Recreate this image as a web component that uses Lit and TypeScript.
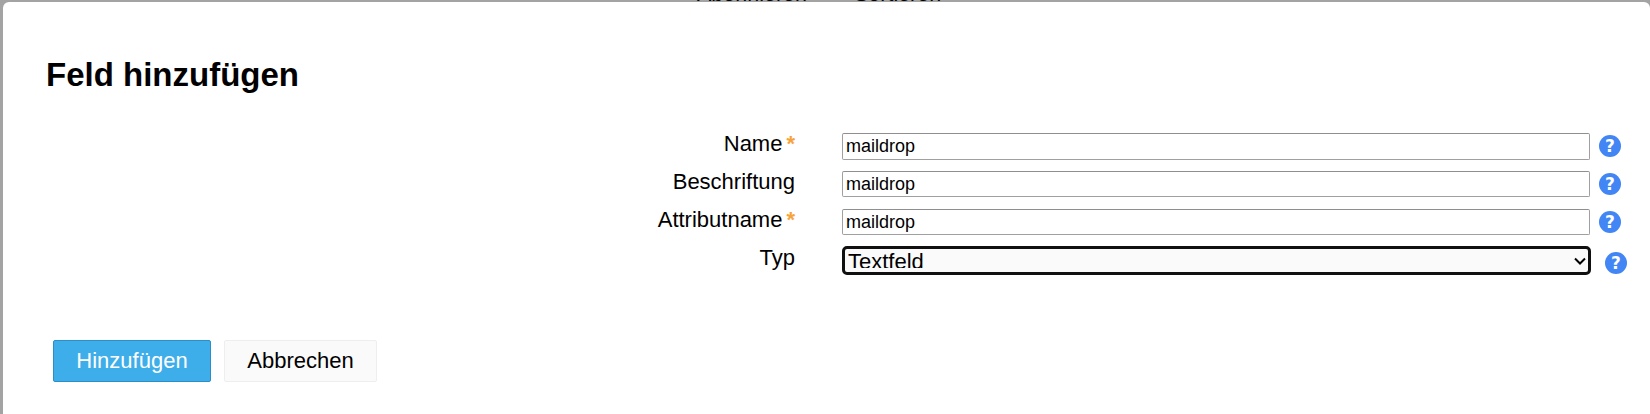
import { LitElement, css, html } from 'lit'
import { customElement } from 'lit/decorators.js'

@customElement('app-root')
export class AppRoot extends LitElement {
  private help() {
    return html`<svg class="help" viewBox="0 0 22 22" width="22" height="22">
      <circle cx="11" cy="11" r="11" fill="#4285f4"></circle>
      <text x="11" y="17" text-anchor="middle" class="q">?</text>
    </svg>`
  }

  render() {
    return html`
      <div class="behind">Abonnieren <span>Sortieren</span></div>
      <div class="modal">
        <h1>Feld hinzufügen</h1>
        <form class="form">
          <label>Name<span class="star">*</span></label>
          <div class="field"><input class="first" value="maildrop" />${this.help()}</div>
          <label>Beschriftung</label>
          <div class="field"><input value="maildrop" />${this.help()}</div>
          <label>Attributname<span class="star">*</span></label>
          <div class="field"><input value="maildrop" />${this.help()}</div>
          <label>Typ</label>
          <div class="field select-field">
            <div class="select-wrap">
              <select><option>Textfeld</option></select>
              <svg class="chevron" viewBox="0 0 12 8" width="12" height="8">
                <path d="M1 1.5 6 6.5 11 1.5" fill="none" stroke="#000" stroke-width="2"></path>
              </svg>
            </div>
            ${this.help()}
          </div>
        </form>
        <div class="actions">
          <button class="primary">Hinzufügen</button>
          <button class="secondary">Abbrechen</button>
        </div>
      </div>
    `
  }

  static get styles() {
    return css`
      :host {
        display: block;
        position: relative;
        height: 414px;
        overflow: hidden;
        background: #a3a3a3;
        font-family: 'Liberation Sans', Arial, sans-serif;
        color: #000;
      }
      .behind {
        position: absolute;
        top: -18px;
        left: 697px;
        font-size: 21.5px;
        line-height: 25px;
        color: #000;
      }
      .behind span {
        margin-left: 41px;
      }
      .modal {
        position: relative;
        box-sizing: border-box;
        height: 412px;
        margin: 2px 0 0 3px;
        padding: 53px 0 0 43px;
        background: #fff;
        border-radius: 6px 6px 0 0;
      }
      h1 {
        margin: 0;
        font-size: 33px;
        line-height: 39px;
        font-weight: bold;
      }
      .form {
        display: grid;
        grid-template-columns: 749px 1fr;
        column-gap: 47px;
        margin-top: 39px;
      }
      label {
        font-size: 22px;
        line-height: 25px;
        margin-top: -2px;
        text-align: right;
      }
      .star {
        margin-left: 4px;
        font-weight: bold;
        color: #f7a33b;
      }
      .field {
        display: flex;
        align-items: flex-start;
        gap: 9px;
        height: 38px;
      }
      .select-field {
        gap: 14px;
        height: 40px;
      }
      input {
        box-sizing: border-box;
        width: 748px;
        height: 26px;
        padding: 0 3px;
        border: 1px solid #a0a0a0;
        border-top-color: #8f8f8f;
        border-radius: 2px;
        font: 18px 'Liberation Sans', Arial, sans-serif;
        color: #000;
      }
      input.first {
        height: 27px;
      }
      svg.help {
        flex: none;
        margin-top: 2px;
      }
      .q {
        font: bold 17px 'DejaVu Sans', sans-serif;
        fill: #fff;
      }
      .select-wrap {
        position: relative;
        width: 749px;
        height: 29px;
        margin-top: -1px;
      }
      select {
        appearance: none;
        box-sizing: border-box;
        display: block;
        width: 100%;
        height: 100%;
        padding: 0 0 4px 3px;
        border: 3px solid #101010;
        border-radius: 5px;
        background: #fafafa;
        font: 22px 'Liberation Sans', Arial, sans-serif;
        color: #000;
      }
      .chevron {
        position: absolute;
        top: 11px;
        right: 5px;
      }
      .select-field svg.help {
        margin-top: 5px;
      }
      .actions {
        display: flex;
        gap: 13px;
        margin: 53px 0 0 7px;
      }
      button {
        box-sizing: border-box;
        height: 42px;
        border-radius: 2px;
        font: 22px 'Liberation Sans', Arial, sans-serif;
        padding: 0;
      }
      .primary {
        width: 158px;
        background: #3daee9;
        border: 1px solid #2a8fc7;
        color: #fff;
      }
      .secondary {
        width: 153px;
        background: #fafafa;
        border: 1px solid #eee;
        color: #000;
      }
    `
  }
}
